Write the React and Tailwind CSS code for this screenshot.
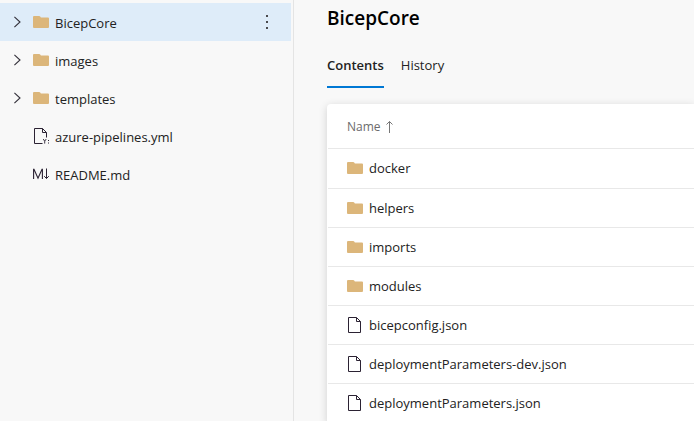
import React from "react";

function FolderIcon() {
  return (
    <svg viewBox="0 0 16 14" className="h-[14px] w-4 shrink-0" aria-hidden="true">
      <path d="M0 2Q0 1 1 1H6.2Q6.8 1 7.2 1.6L7.9 2.6H15Q16 2.6 16 3.6V12Q16 13 15 13H1Q0 13 0 12Z" fill="#dcb67a" />
    </svg>
  );
}

function FileIcon() {
  return (
    <svg viewBox="0 0 16 16" className="h-4 w-4 shrink-0" fill="none" stroke="#2b2233" aria-hidden="true">
      <path d="M1.5 0.5H9.5L13.5 4.5V15.5H1.5Z" />
      <path d="M9.5 0.5V4.5H13.5" />
    </svg>
  );
}

function YamlIcon() {
  return (
    <svg viewBox="0 0 16 16" className="h-4 w-4 shrink-0" fill="none" stroke="#2b2233" aria-hidden="true">
      <path d="M9.5 15.5H1.5V0.5H9.5L13.5 4.5V9.5" />
      <path d="M9.5 0.5V4.5H13.5" />
      <path d="M10.2 11L11.7 13.2L13.2 11M11.7 13.2V15.6" strokeWidth="0.9" />
      <path d="M15.5 12V13M15.5 14.5V15.5" />
    </svg>
  );
}

function MarkdownIcon() {
  return (
    <svg viewBox="0 0 16 12" className="h-3 w-4 shrink-0" fill="none" stroke="#2b2233" aria-hidden="true">
      <path d="M0.6 11V1.2H1L5 10.2L9 1.2H9.4V11" strokeWidth="1.1" />
      <path d="M13.5 0.5V10.5M11.2 8.2L13.5 10.5L15.8 8.2" />
    </svg>
  );
}

function Chevron() {
  return (
    <svg viewBox="0 0 8 12" className="h-3 w-2" fill="none" stroke="#33303a" strokeWidth="1.1" aria-hidden="true">
      <path d="M1.4 0.8L7 6L1.4 11.2" />
    </svg>
  );
}

const icons = { folder: FolderIcon, file: FileIcon, yaml: YamlIcon, markdown: MarkdownIcon };

const tree = [
  { name: "BicepCore", icon: "folder", selected: true },
  { name: "images", icon: "folder" },
  { name: "templates", icon: "folder" },
  { name: "azure-pipelines.yml", icon: "yaml" },
  { name: "README.md", icon: "markdown" },
];

const rows = [
  { name: "docker", icon: "folder" },
  { name: "helpers", icon: "folder" },
  { name: "imports", icon: "folder" },
  { name: "modules", icon: "folder" },
  { name: "bicepconfig.json", icon: "file" },
  { name: "deploymentParameters-dev.json", icon: "file" },
  { name: "deploymentParameters.json", icon: "file" },
];

function Entry({ name, icon, labelClass }) {
  const Icon = icons[icon];
  return (
    <a href="#" className="flex items-center gap-[6px]">
      <Icon />
      <span className={labelClass}>{name}</span>
    </a>
  );
}

export default function App() {
  return (
    <div className="flex h-screen overflow-hidden bg-[#f8f8f8] font-['Open_Sans','Noto_Sans',sans-serif] text-[13px] leading-5 text-[#222222]">
      <nav aria-label="Files" className="w-[294px] shrink-0 border-r border-[#e4e4e4] pt-[3px] pr-[2px]">
        <ul>
          {tree.map((item) => (
            <li
              key={item.name}
              className={item.selected ? "flex h-[38px] items-center bg-[#deecf9] pl-[13px]" : "flex h-[38px] items-center pl-[13px]"}
            >
              <span className="flex w-5 items-center">
                {item.icon === "folder" && (
                  <button type="button" aria-label={"Expand " + item.name}>
                    <Chevron />
                  </button>
                )}
              </span>
              <Entry name={item.name} icon={item.icon} labelClass="pt-0.5" />
              {item.selected && (
                <button type="button" aria-label="More options" className="mr-4 ml-auto flex h-5 w-4 items-center justify-center">
                  <svg viewBox="0 0 4 14" className="h-[14px] w-1" fill="#4a4a4e" aria-hidden="true">
                    <path d="M1 0H3V2H1ZM1 6H3V8H1ZM1 12H3V14H1Z" />
                  </svg>
                </button>
              )}
            </li>
          ))}
        </ul>
      </nav>

      <main className="min-w-0 flex-1 pl-[33px]">
        <h1 className="pt-1 text-[19px] leading-7 font-semibold text-black">BicepCore</h1>
        <div role="tablist" className="mt-5 flex gap-[17px]">
          <button type="button" role="tab" aria-selected="true" className="h-9 border-b-2 border-[#0078d4] pb-2 font-semibold">
            Contents
          </button>
          <button type="button" role="tab" aria-selected="false" className="h-9 border-b-2 border-transparent pb-2">
            History
          </button>
        </div>

        <div className="mt-4 rounded-tl bg-white pl-px shadow-[0_2px_8px_rgba(0,0,0,0.16)]">
          <table className="w-full border-collapse text-left">
            <thead>
              <tr className="h-11 border-b border-[#e8e8e8]">
                <th scope="col" className="p-0 pt-0.5 pl-[19px] text-xs font-normal text-[#6b6b6b]">
                  <button type="button" className="flex items-center gap-1">
                    Name
                    <svg viewBox="0 0 8 12" className="h-3 w-2" fill="none" stroke="#777777" aria-label="Sorted ascending">
                      <path d="M4.5 12V0.5M1.5 3.5L4.5 0.5L7.5 3.5" />
                    </svg>
                  </button>
                </th>
              </tr>
            </thead>
            <tbody>
              {rows.map((row) => (
                <tr key={row.name} className="h-[39px] border-b border-[#e8e8e8] first:h-10">
                  <td className="p-0 pl-[19px]">
                    <Entry name={row.name} icon={row.icon} />
                  </td>
                </tr>
              ))}
            </tbody>
          </table>
        </div>
      </main>
    </div>
  );
}
